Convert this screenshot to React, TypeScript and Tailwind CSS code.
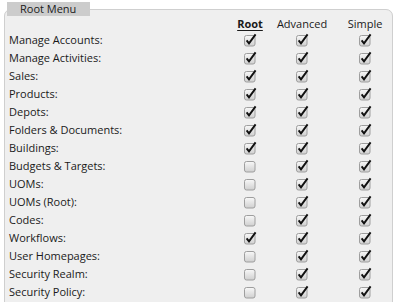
import React from 'react';

const rows: { label: string; root: boolean; advanced: boolean; simple: boolean }[] = [
  { label: 'Manage Accounts:', root: true, advanced: true, simple: true },
  { label: 'Manage Activities:', root: true, advanced: true, simple: true },
  { label: 'Sales:', root: true, advanced: true, simple: true },
  { label: 'Products:', root: true, advanced: true, simple: true },
  { label: 'Depots:', root: true, advanced: true, simple: true },
  { label: 'Folders & Documents:', root: true, advanced: true, simple: true },
  { label: 'Buildings:', root: true, advanced: true, simple: true },
  { label: 'Budgets & Targets:', root: false, advanced: true, simple: true },
  { label: 'UOMs:', root: false, advanced: true, simple: true },
  { label: 'UOMs (Root):', root: false, advanced: true, simple: true },
  { label: 'Codes:', root: false, advanced: true, simple: true },
  { label: 'Workflows:', root: true, advanced: true, simple: true },
  { label: 'User Homepages:', root: false, advanced: true, simple: true },
  { label: 'Security Realm:', root: false, advanced: true, simple: true },
  { label: 'Security Policy:', root: false, advanced: true, simple: true },
];

function Check({ checked }: { checked: boolean }) {
  return (
    <svg width="14" height="14" viewBox="0 0 14 14" className="block">
      <defs>
        <linearGradient id="cbg" x1="0" y1="0" x2="0" y2="1">
          <stop offset="0" stopColor="#f8f8f8" />
          <stop offset="1" stopColor="#cfcfcf" />
        </linearGradient>
      </defs>
      <rect x="1.5" y="2.5" width="10.5" height="10.5" rx="2" fill="url(#cbg)" stroke="#9e9e9e" />
      {checked && (
        <path d="M3.6 7.4 L6 10.4 L12.6 1.4" fill="none" stroke="#111" strokeWidth="1.9" strokeLinejoin="miter" />
      )}
    </svg>
  );
}

export default function App() {
  return (
    <div className="w-[397px] h-[302px] overflow-hidden bg-white text-[11px] text-[#1a1a1a] font-['Open_Sans',sans-serif]">
      <fieldset className="ml-1 mr-1 mt-[2px] border border-[#cfcfcf] rounded-[7px] bg-[#efefef] pl-[2px] pb-2">
        <legend className="bg-[#cccccc] h-[14px] leading-[14px] w-[83px] pl-[13px] text-[11px]">Root Menu</legend>
        <div className="flex h-[15px] items-center leading-none">
          <div className="w-[219px]" />
          <div className="w-[48px] text-center font-bold underline underline-offset-2">Root</div>
          <div className="w-[56px] text-center">Advanced</div>
          <div className="w-[13px]" />
          <div className="w-[44px] text-center">Simple</div>
        </div>
        {rows.map((r) => (
          <div key={r.label} className="flex h-[18px] items-center">
            <div className="w-[219px] pl-[2px]">{r.label}</div>
            <div className="w-[48px] flex justify-center"><Check checked={r.root} /></div>
            <div className="w-[56px] flex justify-center"><Check checked={r.advanced} /></div>
            <div className="w-[13px]" />
            <div className="w-[44px] flex justify-center"><Check checked={r.simple} /></div>
          </div>
        ))}
      </fieldset>
    </div>
  );
}
